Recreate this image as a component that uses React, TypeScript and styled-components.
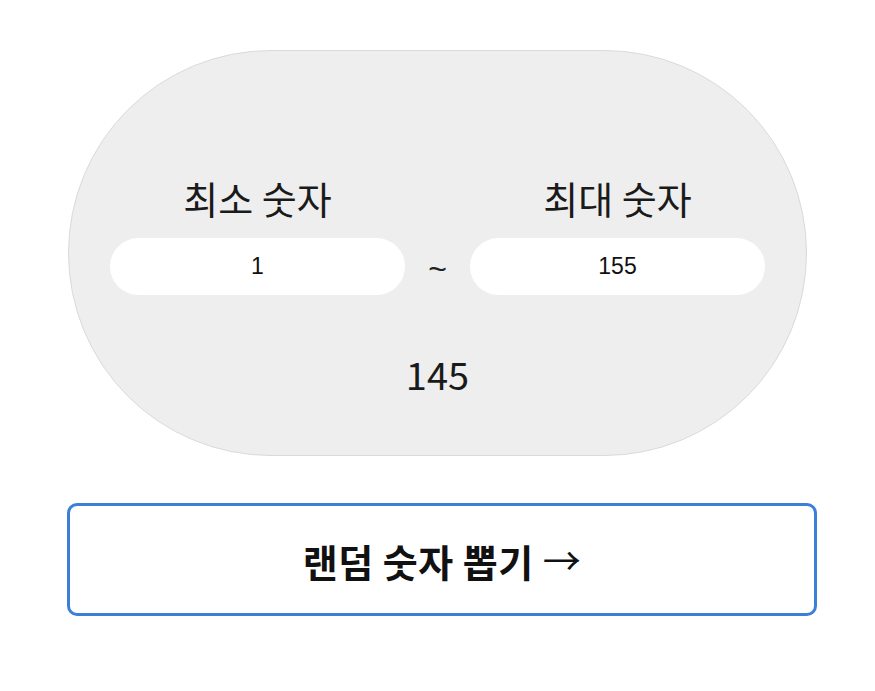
import React, { useState } from 'react';
import styled, { createGlobalStyle } from 'styled-components';

const GlobalStyle = createGlobalStyle`
  body {
    margin: 0;
    background: #ffffff;
    font-family: 'Noto Sans CJK KR', 'Noto Sans', sans-serif;
    color: #111111;
  }
`;

export default function App() {
  const [min, setMin] = useState('1');
  const [max, setMax] = useState('155');
  const [result, setResult] = useState(145);

  const pickRandom = () => {
    const lo = Number(min);
    const hi = Number(max);
    if (Number.isNaN(lo) || Number.isNaN(hi) || lo > hi) return;
    setResult(Math.floor(Math.random() * (hi - lo + 1)) + lo);
  };

  return (
    <>
      <GlobalStyle />
      <Page>
        <Card>
          <RangeGrid>
            <Label>최소 숫자</Label>
            <span />
            <Label>최대 숫자</Label>
            <NumberInput value={min} onChange={(e) => setMin(e.target.value)} />
            <Tilde>~</Tilde>
            <NumberInput value={max} onChange={(e) => setMax(e.target.value)} />
          </RangeGrid>
          <Result>{result}</Result>
        </Card>
        <PickButton onClick={pickRandom}>
          랜덤 숫자 뽑기 <Arrow>→</Arrow>
        </PickButton>
      </Page>
    </>
  );
}

const Page = styled.div`
  display: flex;
  flex-direction: column;
  align-items: flex-start;
  gap: 47px;
  padding: 50px 0 0 67px;
`;

const Card = styled.div`
  box-sizing: border-box;
  width: 739px;
  height: 406px;
  margin-left: 1px;
  padding-top: 124px;
  display: flex;
  flex-direction: column;
  align-items: center;
  background: #eeeeee;
  border: 1px solid #dadada;
  border-radius: 203px;
`;

const RangeGrid = styled.div`
  display: grid;
  grid-template-columns: 295px 65px 295px;
  row-gap: 18px;
  align-items: center;
`;

const Label = styled.div`
  font-size: 38px;
  line-height: 45px;
  text-align: center;
  color: #1a1a1a;
`;

const NumberInput = styled.input`
  box-sizing: border-box;
  width: 100%;
  height: 57px;
  border: none;
  border-radius: 28.5px;
  background: #ffffff;
  font-family: 'Liberation Sans', Arial, sans-serif;
  font-size: 23px;
  color: #111111;
  text-align: center;
  outline: none;
`;

const Tilde = styled.div`
  font-family: 'Liberation Sans', Arial, sans-serif;
  font-size: 32px;
  line-height: 32px;
  text-align: center;
  color: #222222;
  padding-top: 4px;
`;

const Result = styled.div`
  margin-top: 56px;
  font-size: 38px;
  line-height: 46px;
  color: #1a1a1a;
`;

const PickButton = styled.button`
  box-sizing: border-box;
  width: 750px;
  height: 113px;
  background: #ffffff;
  border: 3px solid #3c7fd8;
  border-radius: 10px;
  font-family: 'Noto Sans CJK KR', 'Noto Sans', sans-serif;
  font-size: 38px;
  font-weight: 700;
  letter-spacing: 0.5px;
  color: #111111;
  cursor: pointer;
`;

const Arrow = styled.span`
  font-family: 'Noto Sans CJK KR', sans-serif;
  font-size: 38px;
  font-weight: 400;
  vertical-align: 2px;
`;
